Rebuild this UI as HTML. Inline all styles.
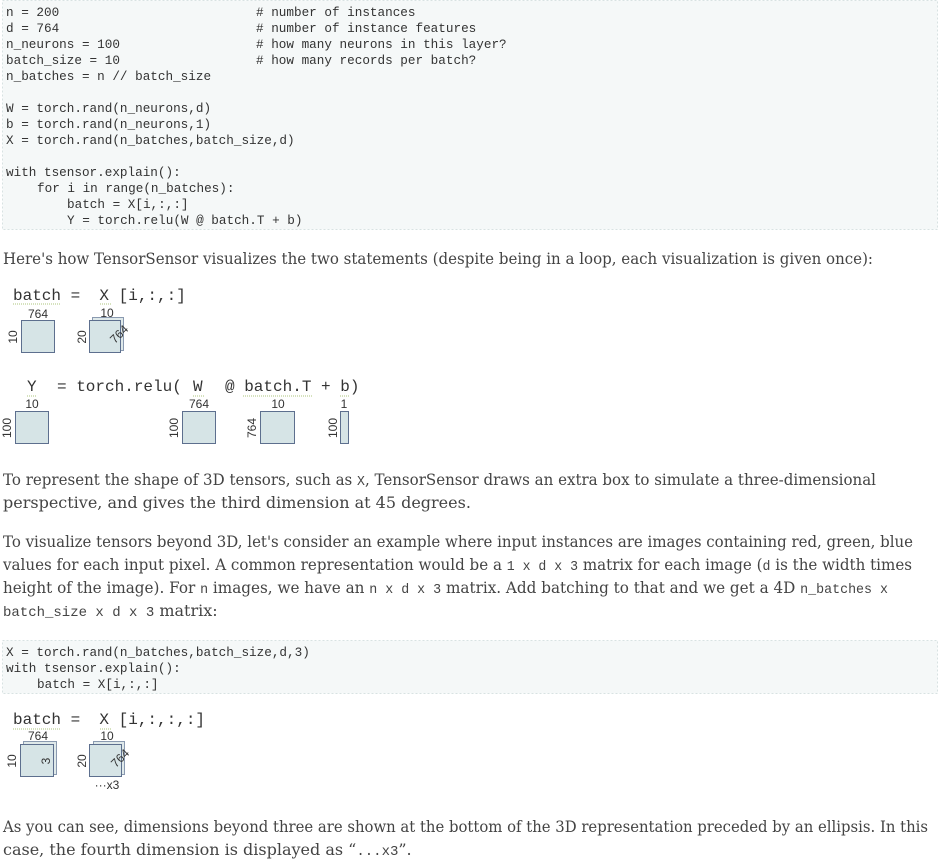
<!DOCTYPE html>
<html><head><meta charset="utf-8"><style>
html,body{margin:0;padding:0;background:#fff;width:941px;height:861px;overflow:hidden}
svg{display:block}
.c{font-family:"Liberation Mono",monospace;font-size:12.67px;fill:#333}
.p{font-family:"DejaVu Serif","Liberation Serif",serif;font-size:16px;fill:#444}
.m{font-family:"Liberation Mono",monospace;font-size:14px}
.d{font-family:"Liberation Mono",monospace;font-size:16px;fill:#333}
.l{font-family:"Liberation Sans",sans-serif;font-size:12px;fill:#333}
.bx{fill:#d6e4e6;stroke:#5d6f8e;stroke-width:1}
.bk{fill:#dfe9ea;stroke:#8a9ab0;stroke-width:1}
.u{stroke:#c8d8a8;stroke-width:1.5;stroke-dasharray:1 1}
</style></head><body>
<svg width="941" height="861" viewBox="0 0 941 861" xmlns="http://www.w3.org/2000/svg">
<rect x="2.5" y="0.5" width="935" height="229" fill="#f5f8f8" stroke="#d8e2e2" stroke-dasharray="2 2"/>
<g class="c" xml:space="preserve">
<text x="6" y="16">n = 200</text><text x="256" y="16"># number of instances</text>
<text x="6" y="32">d = 764</text><text x="256" y="32"># number of instance features</text>
<text x="6" y="48">n_neurons = 100</text><text x="256" y="48"># how many neurons in this layer?</text>
<text x="6" y="64">batch_size = 10</text><text x="256" y="64"># how many records per batch?</text>
<text x="6" y="80">n_batches = n // batch_size</text>
<text x="6" y="112">W = torch.rand(n_neurons,d)</text>
<text x="6" y="128">b = torch.rand(n_neurons,1)</text>
<text x="6" y="144">X = torch.rand(n_batches,batch_size,d)</text>
<text x="6" y="176">with tsensor.explain():</text>
<text x="37" y="192">for i in range(n_batches):</text>
<text x="67" y="208">batch = X[i,:,:]</text>
<text x="67" y="224">Y = torch.relu(W @ batch.T + b)</text>
</g>
<text class="p" x="3" y="264" textLength="870" lengthAdjust="spacingAndGlyphs">Here's how TensorSensor visualizes the two statements (despite being in a loop, each visualization is given once):</text>

<text class="d" x="13" y="300" xml:space="preserve">batch =  X [i,:,:]</text>
<line class="u" x1="13" y1="304" x2="61" y2="304"/><line class="u" x1="100" y1="304" x2="112" y2="304"/>
<rect class="bx" x="21.5" y="320.5" width="33" height="32"/>
<text class="l" x="38" y="318" text-anchor="middle">764</text>
<text class="l" transform="translate(17,337) rotate(-90)" text-anchor="middle">10</text>
<rect class="bk" x="92.5" y="317.5" width="31" height="33"/>
<rect class="bx" x="89.5" y="320.5" width="31" height="32"/>
<text class="l" x="107" y="317" text-anchor="middle">10</text>
<text class="l" transform="translate(86,337) rotate(-90)" text-anchor="middle">20</text>
<text class="l" transform="translate(122,337) rotate(-45)" text-anchor="middle">764</text>

<text class="d" x="27" y="391">Y</text><text class="d" x="57" y="391">= torch.relu(</text>
<text class="d" x="193" y="391">W</text><text class="d" x="225" y="391">@ batch.T + b)</text>
<line class="u" x1="27" y1="396" x2="37" y2="396"/><line class="u" x1="193" y1="396" x2="205" y2="396"/>
<line class="u" x1="243" y1="396" x2="312" y2="396"/><line class="u" x1="340" y1="396" x2="350" y2="396"/>
<rect class="bx" x="15.5" y="411.5" width="33" height="32"/>
<text class="l" x="32" y="408" text-anchor="middle">10</text>
<text class="l" transform="translate(11,428) rotate(-90)" text-anchor="middle">100</text>
<rect class="bx" x="182.5" y="411.5" width="33" height="32"/>
<text class="l" x="199" y="408" text-anchor="middle">764</text>
<text class="l" transform="translate(178,428) rotate(-90)" text-anchor="middle">100</text>
<rect class="bx" x="260.5" y="411.5" width="34" height="32"/>
<text class="l" x="278" y="408" text-anchor="middle">10</text>
<text class="l" transform="translate(256,428) rotate(-90)" text-anchor="middle">764</text>
<rect class="bx" x="340.5" y="411.5" width="8" height="32"/>
<text class="l" x="344" y="408" text-anchor="middle">1</text>
<text class="l" transform="translate(337,428) rotate(-90)" text-anchor="middle">100</text>

<text class="p" x="3" y="485" textLength="873" lengthAdjust="spacingAndGlyphs">To represent the shape of 3D tensors, such as <tspan class="m">X</tspan>, TensorSensor draws an extra box to simulate a three-dimensional</text>
<text class="p" x="3" y="508">perspective, and gives the third dimension at 45 degrees.</text>

<text class="p" x="3" y="547" textLength="910" lengthAdjust="spacingAndGlyphs">To visualize tensors beyond 3D, let's consider an example where input instances are images containing red, green, blue</text>
<text class="p" x="3" y="570" textLength="909" lengthAdjust="spacingAndGlyphs">values for each input pixel. A common representation would be a <tspan class="m">1 x d x 3</tspan> matrix for each image (<tspan class="m">d</tspan> is the width times</text>
<text class="p" x="3" y="593" textLength="885" lengthAdjust="spacingAndGlyphs">height of the image). For <tspan class="m">n</tspan> images, we have an <tspan class="m">n x d x 3</tspan> matrix. Add batching to that and we get a 4D <tspan class="m">n_batches x</tspan></text>
<text class="p" x="3" y="616"><tspan class="m">batch_size x d x 3</tspan> matrix:</text>

<rect x="2.5" y="640.5" width="935" height="53" fill="#f5f8f8" stroke="#d8e2e2" stroke-dasharray="2 2"/>
<g class="c" xml:space="preserve">
<text x="6" y="656">X = torch.rand(n_batches,batch_size,d,3)</text>
<text x="6" y="672">with tsensor.explain():</text>
<text x="37" y="688">batch = X[i,:,:]</text>
</g>

<text class="d" x="13" y="724" xml:space="preserve">batch =  X [i,:,:,:]</text>
<line class="u" x1="13" y1="729" x2="61" y2="729"/><line class="u" x1="100" y1="729" x2="112" y2="729"/>
<rect class="bk" x="23.5" y="741.5" width="33" height="33"/>
<rect class="bx" x="20.5" y="744.5" width="33" height="32"/>
<text class="l" x="38" y="740" text-anchor="middle">764</text>
<text class="l" transform="translate(16,761) rotate(-90)" text-anchor="middle">10</text>
<text class="l" transform="translate(50,761) rotate(-90)" text-anchor="middle">3</text>
<rect class="bk" x="93.5" y="741.5" width="31" height="33"/>
<rect class="bx" x="89.5" y="744.5" width="32" height="32"/>
<text class="l" x="107" y="740" text-anchor="middle">10</text>
<text class="l" transform="translate(86,761) rotate(-90)" text-anchor="middle">20</text>
<text class="l" transform="translate(123,761) rotate(-45)" text-anchor="middle">764</text>
<text class="l" x="107" y="789" text-anchor="middle">···x3</text>

<text class="p" x="3" y="832" textLength="925" lengthAdjust="spacingAndGlyphs">As you can see, dimensions beyond three are shown at the bottom of the 3D representation preceded by an ellipsis. In this</text>
<text class="p" x="3" y="855">case, the fourth dimension is displayed as “<tspan class="m">...x3</tspan>”.</text>
</svg>
</body></html>
